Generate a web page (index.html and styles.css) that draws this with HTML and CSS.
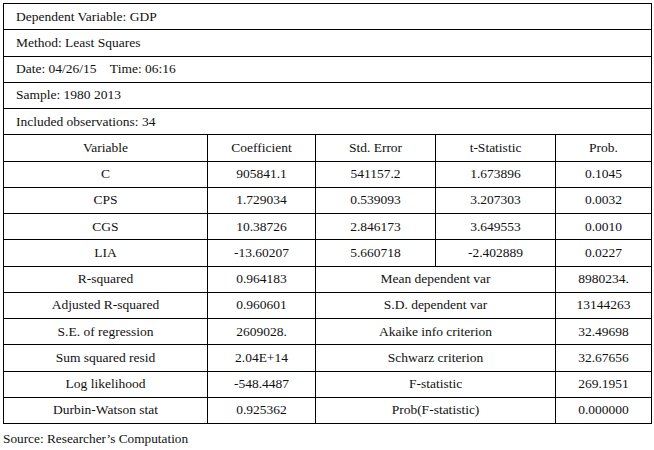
FILE: index.html
```html
<!DOCTYPE html>
<html>
<head>
<meta charset="utf-8">
<link rel="stylesheet" href="styles.css">
</head>
<body>
<table class="reg">
  <colgroup>
    <col class="c1"><col class="c2"><col class="c3"><col class="c4"><col class="c5">
  </colgroup>
  <tbody>
    <tr><td colspan="5" class="info">Dependent Variable: GDP</td></tr>
    <tr><td colspan="5" class="info">Method: Least Squares</td></tr>
    <tr><td colspan="5" class="info">Date: 04/26/15    Time: 06:16</td></tr>
    <tr><td colspan="5" class="info">Sample: 1980 2013</td></tr>
    <tr><td colspan="5" class="info">Included observations: 34</td></tr>
    <tr><td>Variable</td><td>Coefficient</td><td>Std. Error</td><td>t-Statistic</td><td>Prob.</td></tr>
    <tr><td>C</td><td>905841.1</td><td>541157.2</td><td>1.673896</td><td>0.1045</td></tr>
    <tr><td>CPS</td><td>1.729034</td><td>0.539093</td><td>3.207303</td><td>0.0032</td></tr>
    <tr><td>CGS</td><td>10.38726</td><td>2.846173</td><td>3.649553</td><td>0.0010</td></tr>
    <tr><td>LIA</td><td>-13.60207</td><td>5.660718</td><td>-2.402889</td><td>0.0227</td></tr>
    <tr><td>R-squared</td><td>0.964183</td><td colspan="2">Mean dependent var</td><td>8980234.</td></tr>
    <tr><td>Adjusted R-squared</td><td>0.960601</td><td colspan="2">S.D. dependent var</td><td>13144263</td></tr>
    <tr><td>S.E. of regression</td><td>2609028.</td><td colspan="2">Akaike info criterion</td><td>32.49698</td></tr>
    <tr><td>Sum squared resid</td><td>2.04E+14</td><td colspan="2">Schwarz criterion</td><td>32.67656</td></tr>
    <tr><td>Log likelihood</td><td>-548.4487</td><td colspan="2">F-statistic</td><td>269.1951</td></tr>
    <tr><td>Durbin-Watson stat</td><td>0.925362</td><td colspan="2">Prob(F-statistic)</td><td>0.000000</td></tr>
  </tbody>
</table>
<p class="source">Source: Researcher’s Computation</p>
</body>
</html>
```

FILE: styles.css
```css
html, body {
  margin: 0;
  padding: 0;
  background: #fff;
}
body {
  padding: 3px 0 0 3px;
  font-family: "Liberation Serif", "Times New Roman", serif;
  font-size: 13.5px;
  color: #111;
}
.reg {
  border-collapse: collapse;
  table-layout: fixed;
  width: 649px;
}
.c1 { width: 204px; }
.c2 { width: 108px; }
.c3 { width: 120px; }
.c4 { width: 120px; }
.c5 { width: 96px; }
.reg td {
  border: 1px solid #000;
  height: 25.25px;
  padding: 0;
  text-align: center;
  vertical-align: middle;
  white-space: pre;
}
.reg td.info {
  text-align: left;
  padding-left: 12px;
}
.source {
  margin: 7px 0 0 0;
  font-size: 13.3px;
}
```
